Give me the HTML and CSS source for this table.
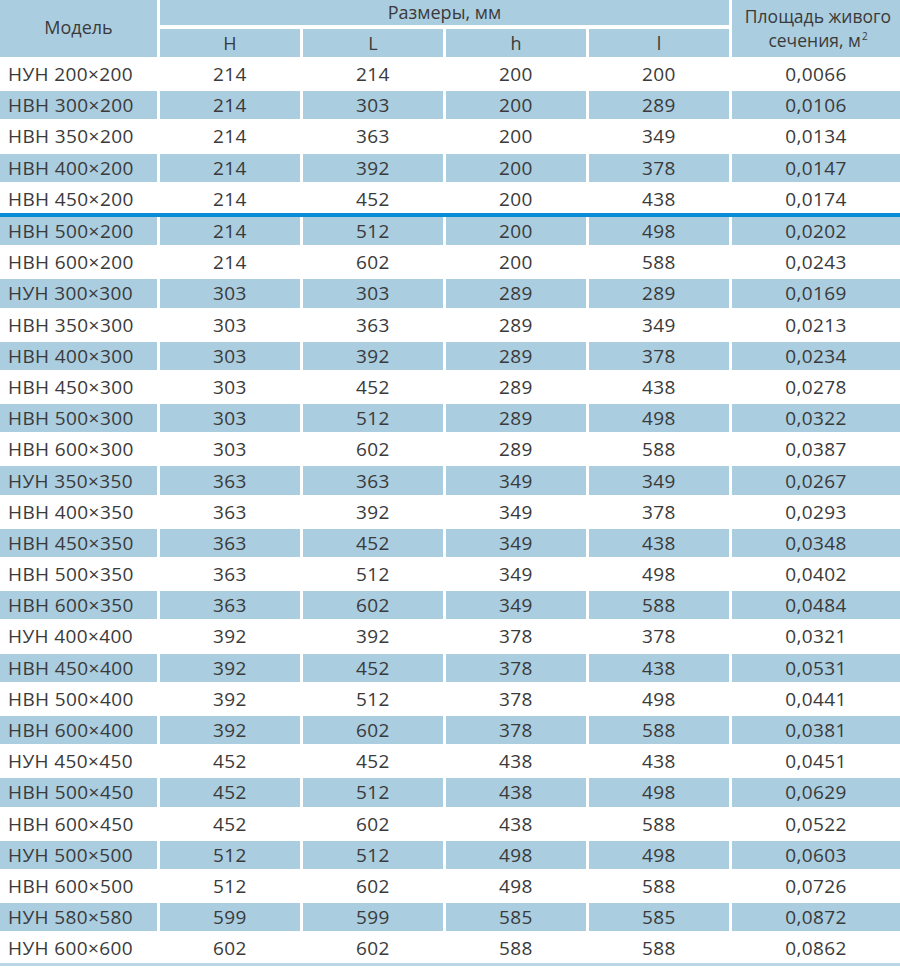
FILE: index.html
```html
<!DOCTYPE html>
<html lang="ru">
<head>
<meta charset="utf-8">
<link rel="stylesheet" href="styles.css">
</head>
<body>
<div class="table">
  <div class="head">
    <div class="hc h-model">Модель</div>
    <div class="hc h-dims">Размеры, мм</div>
    <div class="hc h-H">H</div>
    <div class="hc h-L">L</div>
    <div class="hc h-h">h</div>
    <div class="hc h-l">l</div>
    <div class="hc h-area"><span>Площадь живого<br>сечения, м<sup>2</sup></span></div>
  </div>
  <div class="row"><div>НУН 200×200</div><div>214</div><div>214</div><div>200</div><div>200</div><div>0,0066</div></div>
  <div class="row alt"><div>НВН 300×200</div><div>214</div><div>303</div><div>200</div><div>289</div><div>0,0106</div></div>
  <div class="row"><div>НВН 350×200</div><div>214</div><div>363</div><div>200</div><div>349</div><div>0,0134</div></div>
  <div class="row alt"><div>НВН 400×200</div><div>214</div><div>392</div><div>200</div><div>378</div><div>0,0147</div></div>
  <div class="row"><div>НВН 450×200</div><div>214</div><div>452</div><div>200</div><div>438</div><div>0,0174</div></div>
  <div class="sep"></div>
  <div class="row alt first"><div>НВН 500×200</div><div>214</div><div>512</div><div>200</div><div>498</div><div>0,0202</div></div>
  <div class="row"><div>НВН 600×200</div><div>214</div><div>602</div><div>200</div><div>588</div><div>0,0243</div></div>
  <div class="row alt"><div>НУН 300×300</div><div>303</div><div>303</div><div>289</div><div>289</div><div>0,0169</div></div>
  <div class="row"><div>НВН 350×300</div><div>303</div><div>363</div><div>289</div><div>349</div><div>0,0213</div></div>
  <div class="row alt"><div>НВН 400×300</div><div>303</div><div>392</div><div>289</div><div>378</div><div>0,0234</div></div>
  <div class="row"><div>НВН 450×300</div><div>303</div><div>452</div><div>289</div><div>438</div><div>0,0278</div></div>
  <div class="row alt"><div>НВН 500×300</div><div>303</div><div>512</div><div>289</div><div>498</div><div>0,0322</div></div>
  <div class="row"><div>НВН 600×300</div><div>303</div><div>602</div><div>289</div><div>588</div><div>0,0387</div></div>
  <div class="row alt"><div>НУН 350×350</div><div>363</div><div>363</div><div>349</div><div>349</div><div>0,0267</div></div>
  <div class="row"><div>НВН 400×350</div><div>363</div><div>392</div><div>349</div><div>378</div><div>0,0293</div></div>
  <div class="row alt"><div>НВН 450×350</div><div>363</div><div>452</div><div>349</div><div>438</div><div>0,0348</div></div>
  <div class="row"><div>НВН 500×350</div><div>363</div><div>512</div><div>349</div><div>498</div><div>0,0402</div></div>
  <div class="row alt"><div>НВН 600×350</div><div>363</div><div>602</div><div>349</div><div>588</div><div>0,0484</div></div>
  <div class="row"><div>НУН 400×400</div><div>392</div><div>392</div><div>378</div><div>378</div><div>0,0321</div></div>
  <div class="row alt"><div>НВН 450×400</div><div>392</div><div>452</div><div>378</div><div>438</div><div>0,0531</div></div>
  <div class="row"><div>НВН 500×400</div><div>392</div><div>512</div><div>378</div><div>498</div><div>0,0441</div></div>
  <div class="row alt"><div>НВН 600×400</div><div>392</div><div>602</div><div>378</div><div>588</div><div>0,0381</div></div>
  <div class="row"><div>НУН 450×450</div><div>452</div><div>452</div><div>438</div><div>438</div><div>0,0451</div></div>
  <div class="row alt"><div>НВН 500×450</div><div>452</div><div>512</div><div>438</div><div>498</div><div>0,0629</div></div>
  <div class="row"><div>НВН 600×450</div><div>452</div><div>602</div><div>438</div><div>588</div><div>0,0522</div></div>
  <div class="row alt"><div>НУН 500×500</div><div>512</div><div>512</div><div>498</div><div>498</div><div>0,0603</div></div>
  <div class="row"><div>НВН 600×500</div><div>512</div><div>602</div><div>498</div><div>588</div><div>0,0726</div></div>
  <div class="row alt"><div>НУН 580×580</div><div>599</div><div>599</div><div>585</div><div>585</div><div>0,0872</div></div>
  <div class="row"><div>НУН 600×600</div><div>602</div><div>602</div><div>588</div><div>588</div><div>0,0862</div></div>
  <div class="bottom"></div>
</div>
</body>
</html>
```

FILE: styles.css
```css
html, body {
  margin: 0;
  padding: 0;
  background: #ffffff;
}

body {
  font-family: "Open Sans", "Noto Sans", "Liberation Sans", sans-serif;
  font-size: 18px;
  font-weight: 400;
  color: #3a3a3a;
}

.table {
  width: 900px;
}

.head {
  display: grid;
  grid-template-columns: 157px 140px 140px 140px 140px 168px;
  grid-template-rows: 25px 28px;
  column-gap: 3px;
  row-gap: 4px;
  height: 57px;
}

.hc {
  background: #aacde0;
  display: flex;
  align-items: center;
  justify-content: center;
  text-align: center;
  line-height: 24px;
}

.h-model { grid-column: 1; grid-row: 1 / 3; padding-bottom: 3px; }
.h-dims { grid-column: 2 / 6; grid-row: 1; padding-bottom: 1px; }
.h-H { grid-column: 2; grid-row: 2; }
.h-L { grid-column: 3; grid-row: 2; }
.h-h { grid-column: 4; grid-row: 2; }
.h-l { grid-column: 5; grid-row: 2; }
.h-area {
  grid-column: 6;
  grid-row: 1 / 3;
  padding-bottom: 2px;
  padding-left: 4px;
  font-size: 17.5px;
}

.h-area sup {
  font-size: 10px;
  line-height: 0;
  vertical-align: 7px;
  margin-left: 1px;
}

.row {
  display: grid;
  grid-template-columns: 157px 140px 140px 140px 140px 168px;
  column-gap: 3px;
  margin-top: 3px;
  height: 28.2px;
  font-size: 19px;
  letter-spacing: 0.4px;
}

.row.first {
  margin-top: 0;
}

.row > div {
  display: flex;
  align-items: center;
  justify-content: center;
  line-height: 28px;
  white-space: nowrap;
}

.row > div:first-child {
  justify-content: flex-start;
  padding-left: 8px;
}

.row.alt > div {
  background: #aacde0;
}

.sep {
  height: 4px;
  background: #0a8bd6;
}

.bottom {
  margin-top: 0.5px;
  height: 3px;
  background: #b9d7e7;
}
```
